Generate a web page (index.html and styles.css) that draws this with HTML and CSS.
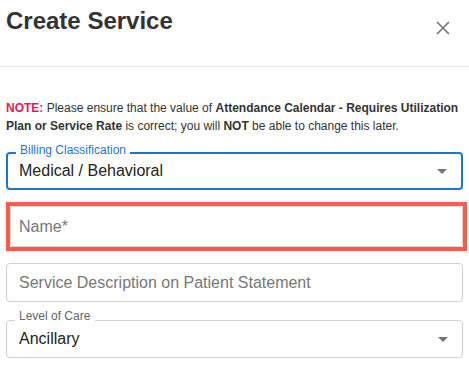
FILE: index.html
```html
<!DOCTYPE html>
<html lang="en">
<head>
  <meta charset="UTF-8" />
  <meta name="viewport" content="width=device-width, initial-scale=1.0"/>
  <title>Create Service</title>
  <link rel="stylesheet" href="styles.css">
</head>
<body>
  <div class="modal">
    <div class="modal-header">
      <h1 class="title">Create Service</h1>
      <button class="close" aria-label="Close">
        <svg width="14" height="14" viewBox="0 0 14 14">
          <path d="M1 1 L13 13 M13 1 L1 13" stroke="#757575" stroke-width="1.6" fill="none" />
        </svg>
      </button>
    </div>

    <div class="modal-body">
      <p class="note">
        <span class="note-tag">NOTE:</span> Please ensure that the value of <b>Attendance Calendar - Requires Utilization Plan or Service Rate</b> is correct; you will <b>NOT</b> be able to change this later.
      </p>

      <div class="field select focused billing">
        <span class="field-label">Billing Classification</span>
        <span class="value">Medical / Behavioral</span>
        <span class="arrow"></span>
      </div>

      <div class="highlight">
        <div class="field name">
          <span class="placeholder">Name*</span>
        </div>
      </div>

      <div class="field description">
        <span class="placeholder">Service Description on Patient Statement</span>
      </div>

      <div class="field select level">
        <span class="field-label">Level of Care</span>
        <span class="value">Ancillary</span>
        <span class="arrow"></span>
      </div>
    </div>
  </div>
</body>
</html>
```

FILE: styles.css
```css
* {
  box-sizing: border-box;
  margin: 0;
  padding: 0;
  font-family: 'Liberation Sans', Arial, sans-serif;
}

body {
  background-color: #fff;
  color: #333;
  width: 469px;
  height: 366px;
  overflow: hidden;
}

.modal-header {
  display: flex;
  justify-content: space-between;
  align-items: flex-start;
  height: 67px;
  padding: 6px 19px 0 6px;
  border-bottom: 1px solid #e5e5e5;
}

.title {
  font-size: 24px;
  line-height: 29px;
  font-weight: bold;
  color: #333;
}

.close {
  border: none;
  background: none;
  margin-top: 15px;
  width: 14px;
  height: 14px;
  display: block;
}

.close svg {
  display: block;
}

.modal-body {
  padding: 32px 6px 0 6px;
  display: flex;
  flex-direction: column;
}

.note {
  font-size: 12px;
  line-height: 18px;
  color: #333;
}

.note-tag {
  color: #e8175d;
  font-weight: bold;
}

.field {
  position: relative;
  display: flex;
  align-items: center;
  height: 38px;
  border: 1px solid #cfcfcf;
  border-radius: 4px;
  padding: 0 12px;
  font-size: 16px;
}

.field.focused {
  border: 2px solid #1976d2;
  padding: 0 11px;
}

.billing {
  margin-top: 17px;
}

.highlight {
  margin-top: 12px;
  margin-right: -4px;
  border: 4px solid #fd5a4b;
  height: 49px;
}

.field.name {
  height: 41px;
  border-radius: 2px;
  border-color: #d6d6d6;
  padding: 0 8px;
}

.description {
  margin-top: 12px;
  height: 39px;
}

.level {
  margin-top: 18px;
}

.value {
  color: #222;
}

.placeholder {
  color: #777;
}

.field-label {
  position: absolute;
  top: -11px;
  left: 8px;
  padding: 0 4px;
  background-color: #fff;
  font-size: 12px;
  line-height: 12px;
  color: #666;
}

.billing .field-label {
  top: -10px;
  color: #1976d2;
}

.level .field-label {
  top: -11px;
  padding: 0 5px 0 4px;
}

.arrow {
  position: absolute;
  right: 14px;
  top: 50%;
  margin-top: -2px;
  width: 0;
  height: 0;
  border-left: 5px solid transparent;
  border-right: 5px solid transparent;
  border-top: 5px solid #757575;
}
```
